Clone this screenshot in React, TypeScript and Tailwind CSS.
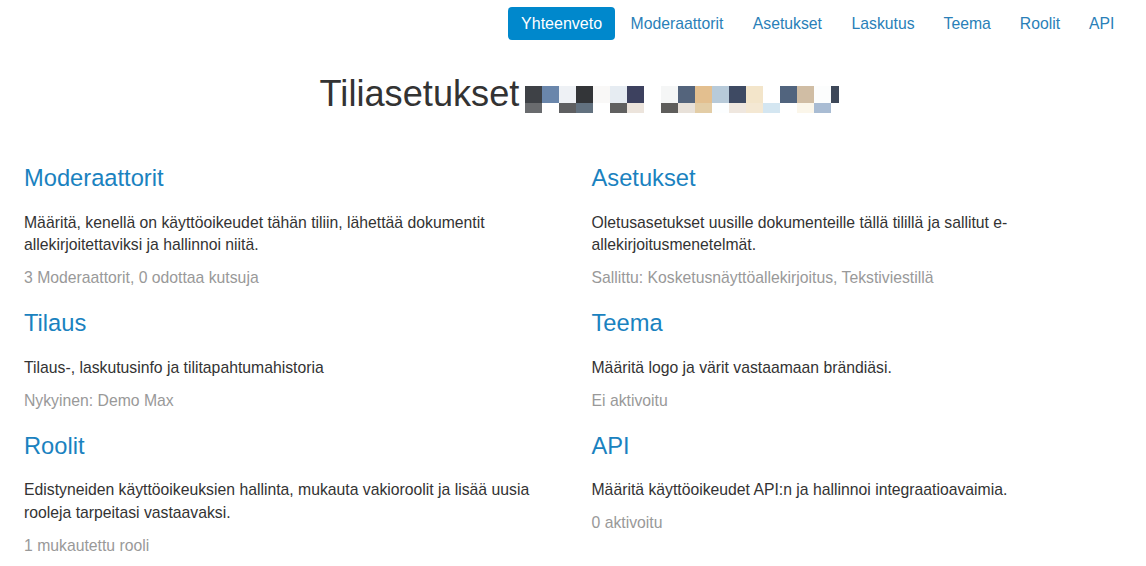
const nav = [
  { n: "Moderaattorit", c: "mr-[0.5px]" },
  { n: "Asetukset", c: "mr-[0.5px]" },
  { n: "Laskutus", c: "" },
  { n: "Teema", c: "" },
  { n: "Roolit", c: "" },
  { n: "API", c: "" },
];

const row1 = ["#3e4146","#6a86ab","#eef1f5","#333538","#f9f8f7","#e6ecf2","#3d415f","#ffffff","#f5f6f6","#54647c","#e3bf8f","#b7cad9","#3e4a63","#f3e5ca","#ffffff","#51647e","#d0bda4","#fcfdfd","#3e4859"];
const row2 = ["#696b6e","#ffffff","#5e5f61","#62717f","#ffffff","#606060","#ece4dc","#ffffff","#5e5d5b","#e8e1d9","#e3cda6","#fcfeff","#efe7df","#f4e8d3","#d4e6f1","#ffffff","#fbf6ea","#a9bcd3","#ffffff"];

const sections = [
  { t: "Moderaattorit", d: ["Määritä, kenellä on käyttöoikeudet tähän tiliin, lähettää dokumentit", "allekirjoitettaviksi ja hallinnoi niitä."], m: "3 Moderaattorit, 0 odottaa kutsuja" },
  { t: "Asetukset", d: ["Oletusasetukset uusille dokumenteille tällä tilillä ja sallitut e-", "allekirjoitusmenetelmät."], m: "Sallittu: Kosketusnäyttöallekirjoitus, Tekstiviestillä" },
  { t: "Tilaus", d: ["Tilaus-, laskutusinfo ja tilitapahtumahistoria"], m: "Nykyinen: Demo Max" },
  { t: "Teema", d: ["Määritä logo ja värit vastaamaan brändiäsi."], m: "Ei aktivoitu" },
  { t: "Roolit", d: ["Edistyneiden käyttöoikeuksien hallinta, mukauta vakioroolit ja lisää uusia", "rooleja tarpeitasi vastaavaksi."], m: "1 mukautettu rooli" },
  { t: "API", d: ["Määritä käyttöoikeudet API:n ja hallinnoi integraatioavaimia."], m: "0 aktivoitu" },
];

function Blur() {
  return (
    <svg width="314" height="27" viewBox="0 0 314 27" className="ml-[6px] mt-[17px] shrink-0" shapeRendering="crispEdges">
      {row1.map((c, i) => <rect key={i} x={i * 17} y={0} width={i === 18 ? 8 : 17} height={17} fill={c} />)}
      {row2.map((c, i) => <rect key={i} x={i * 17} y={17} width={17} height={10} fill={c} />)}
    </svg>
  );
}

export default function App() {
  return (
    <div className="w-[1146px] h-[566px] overflow-hidden bg-white font-['Liberation_Sans',Arial,sans-serif] text-[15.75px] text-[#333333]">
      <nav className="flex justify-end pt-[7px] pr-[18px] gap-[2px] h-[40px]">
        <a className="h-[33px] flex items-center px-[13px] rounded-[4px] bg-[#0088cc] text-white text-[16px]">Yhteenveto</a>
        {nav.map((i) => (
          <a key={i.n} className={`h-[33px] flex items-center px-[13.5px] text-[#2a7fb8] ${i.c}`}>{i.n}</a>
        ))}
      </nav>
      <div className="flex items-start justify-center h-[104.9px] pt-[29px] pl-[13px]">
        <h1 className="text-[36.2px] leading-[50px] text-[#333333]">Tiliasetukset</h1>
        <Blur />
      </div>
      <div className="grid grid-cols-[567.5px_1fr] pl-[24px]">
        {sections.map((s) => (
          <section key={s.t}>
            <h2 className="text-[23.7px] leading-[34px] pt-[16.5px] text-[#1a82bf]">{s.t}</h2>
            <div className="mt-[16.6px] leading-[22.4px]">
              {s.d.map((l) => <p key={l}>{l}</p>)}
            </div>
            <p className="mt-[10.6px] leading-[22.4px] text-[#999999]">{s.m}</p>
          </section>
        ))}
      </div>
    </div>
  );
}
